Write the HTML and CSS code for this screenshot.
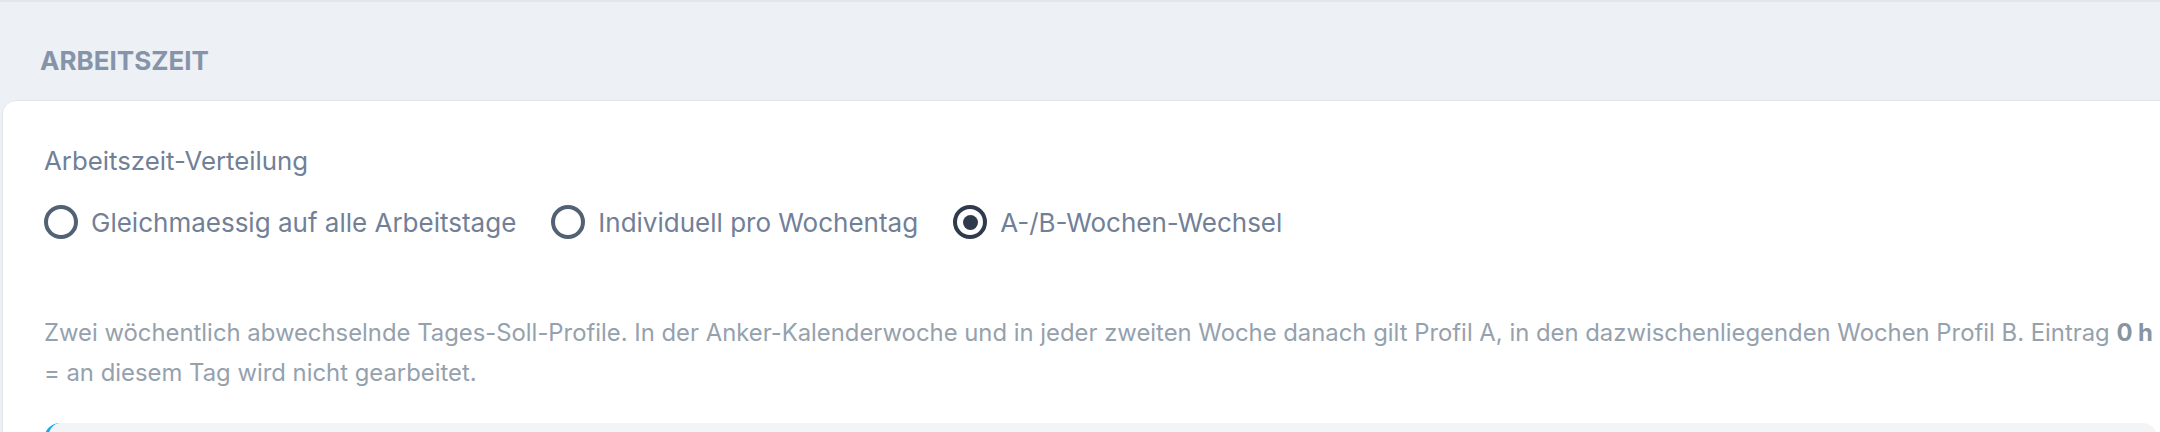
FILE: index.html
```html
<!DOCTYPE html>
<html lang="de">
<head>
    <meta charset="UTF-8">
    <meta name="viewport" content="width=device-width, initial-scale=1.0">
    <title>Arbeitszeit</title>
    <link rel="stylesheet" href="styles.css">
</head>
<body>

<!-- Arbeitszeit Section -->
<section class="panel">
    <div class="panel-header">
        <h2>Arbeitszeit</h2>
    </div>

    <div class="card">
        <div class="field-label">Arbeitszeit-Verteilung</div>
        <div class="radio-group">
            <label class="radio">
                <input type="radio" name="verteilung" value="gleich">
                <span>Gleichmaessig auf alle Arbeitstage</span>
            </label>
            <label class="radio">
                <input type="radio" name="verteilung" value="individuell">
                <span>Individuell pro Wochentag</span>
            </label>
            <label class="radio">
                <input type="radio" name="verteilung" value="ab" checked>
                <span>A-/B-Wochen-Wechsel</span>
            </label>
        </div>

        <p class="hint">
            Zwei wöchentlich abwechselnde Tages-Soll-Profile. In der Anker-Kalenderwoche und in jeder zweiten Woche danach gilt Profil A, in den dazwischenliegenden Wochen Profil B. Eintrag <strong>0&nbsp;h</strong> = an diesem Tag wird nicht gearbeitet.
        </p>

        <div class="profile-box"></div>
    </div>
</section>

</body>
</html>
```

FILE: styles.css
```css
html, body {
    overflow: hidden;
}
body {
    font-family: Inter, "Noto Sans", sans-serif;
    margin: 0;
    padding: 0;
    background-color: #edf0f5;
}

/* Panel */
.panel {
    border-top: 2px solid #e3e7ed;
    background-color: #edf0f5;
    padding-left: 2px;
}

.panel-header {
    padding: 43px 38px 23px;
}

.panel-header h2 {
    margin: 0;
    font-size: 26px;
    line-height: 32px;
    font-weight: 700;
    text-transform: uppercase;
    color: #8694a9;
}

.card {
    background-color: #fff;
    border: 1px solid #e3e6eb;
    border-radius: 14px 0 0 0;
    margin-right: -40px;
    padding: 42px 41px 20px;
}

/* Radio group */
.field-label {
    font-size: 25.8px;
    line-height: 36px;
    color: #718097;
}

.radio-group {
    display: flex;
    align-items: center;
    gap: 35px;
    margin-top: 23px;
    height: 40px;
}

.radio {
    display: flex;
    align-items: center;
    gap: 13px;
    font-size: 26px;
    color: #718097;
    cursor: pointer;
}

.radio input {
    appearance: none;
    -webkit-appearance: none;
    margin: 0;
    width: 34px;
    height: 34px;
    border: 4px solid #526173;
    border-radius: 50%;
    box-sizing: border-box;
    display: grid;
    place-items: center;
}

.radio input:checked {
    border-color: #2f3b4d;
}

.radio input:checked::before {
    content: "";
    width: 15px;
    height: 15px;
    border-radius: 50%;
    background-color: #2f3b4d;
}

/* Hint text */
.hint {
    margin: 71px 0 0;
    font-size: 23.85px;
    line-height: 40px;
    color: #95a1ad;
}

.hint strong {
    color: #8795a3;
    font-weight: 700;
    white-space: nowrap;
}

.profile-box {
    margin-top: 30px;
    height: 120px;
    background-color: #f3f4f6;
    border-left: 4px solid #1aa7ec;
    border-radius: 16px;
}
```
